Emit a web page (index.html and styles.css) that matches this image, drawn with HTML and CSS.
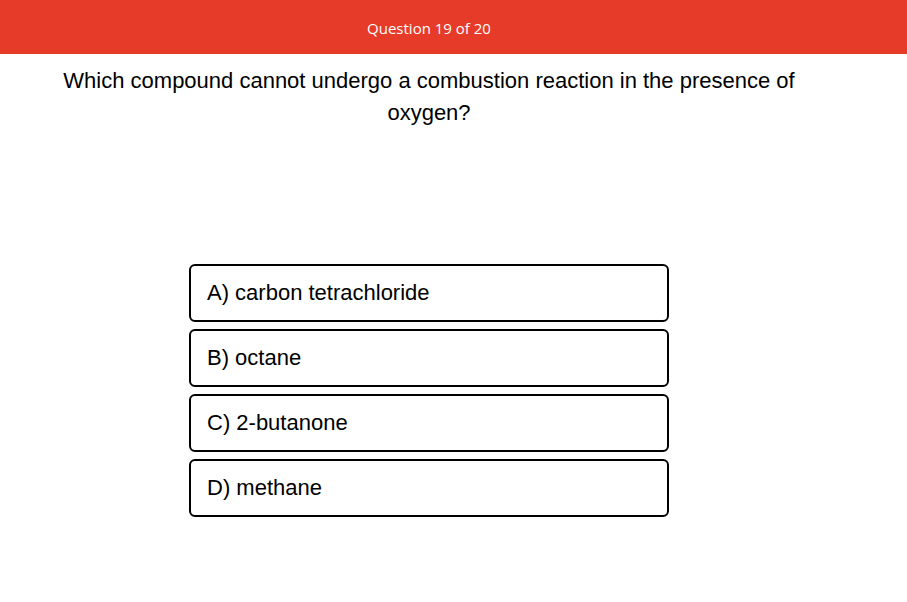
FILE: index.html
```html
<!DOCTYPE html>
<html>
<head>
<meta charset="utf-8">
<link rel="stylesheet" href="styles.css">
</head>
<body>
<div class="page">
  <header class="bar"><span class="bar-title">Question 19 of 20</span></header>
  <main class="quiz">
    <h1 class="question">Which compound cannot undergo a combustion reaction in the presence of oxygen?</h1>
    <div class="options">
      <button class="option">A) carbon tetrachloride</button>
      <button class="option">B) octane</button>
      <button class="option">C) 2-butanone</button>
      <button class="option">D) methane</button>
    </div>
  </main>
</div>
</body>
</html>
```
FILE: styles.css
```css
html, body {
  margin: 0;
  padding: 0;
  background: #ffffff;
}
.page {
  width: 858px;
}
.bar {
  height: 54px;
  width: 907px;
  background: #e63b29;
  display: flex;
  align-items: center;
  box-sizing: border-box;
  padding-right: 49px;
  padding-top: 2px;
  justify-content: center;
}
.bar-title {
  color: #ffffff;
  font-family: "Open Sans", sans-serif;
  font-size: 15px;
}
.quiz {
  display: flex;
  flex-direction: column;
  align-items: center;
}
.question {
  margin: 11px 0 0;
  max-width: 780px;
  font-family: "Liberation Sans", Arial, sans-serif;
  font-weight: normal;
  font-size: 22px;
  line-height: 32px;
  text-align: center;
  color: #000;
}
.options {
  margin-top: 135px;
  display: flex;
  flex-direction: column;
  gap: 7px;
  width: 480px;
}
.option {
  height: 58px;
  box-sizing: border-box;
  border: 2px solid #000;
  border-radius: 6px;
  background: #fff;
  text-align: left;
  padding: 0 16px;
  font-family: "Liberation Sans", Arial, sans-serif;
  font-size: 22px;
  color: #000;
}
```
